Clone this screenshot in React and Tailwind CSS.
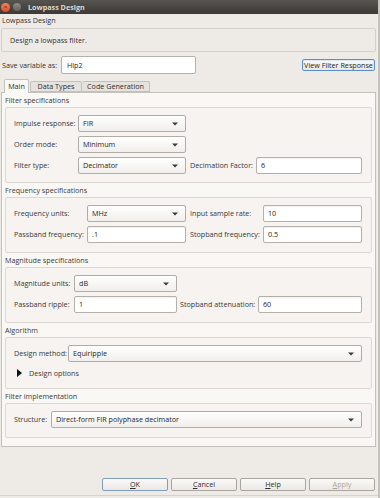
import React from 'react';

const Tri = () => (
    <svg width="6" height="4" viewBox="0 0 6 4" className="shrink-0">
        <path d="M0 0.5 L6 0.5 L3 3.5 Z" fill="#3a3a3a" />
    </svg>
);

const Combo = ({ value, w }) => (
    <div className={`${w} h-[17px] shrink-0 flex items-center justify-between pl-[4px] pr-[7px] border border-[#b1aca6] rounded-[2px] bg-gradient-to-b from-[#ffffff] to-[#f1efec] text-[#262626]`}>
        <span>{value}</span>
        <Tri />
    </div>
);

const Field = ({ value, w }) => (
    <div className={`${w} h-[17px] shrink-0 flex items-center pl-[4px] border border-[#b5b0aa] rounded-[2px] bg-white text-[#262626] shadow-[inset_0_1px_1px_rgba(0,0,0,0.06)]`}>
        {value}
    </div>
);

const Label = ({ text, w }) => <div className={`${w} shrink-0 whitespace-nowrap`}>{text}</div>;

const Section = ({ title }) => (
    <div className="h-[14px] leading-[14px] pl-[3px]">{title}</div>
);

const Group = ({ children, pb = 'pb-[8px]' }) => (
    <div className={`ml-[3px] w-[367px] border border-[#dcd8d2] rounded-[2px] bg-[#f6f3f0] pt-[7px] pl-[8px] flex flex-col gap-[4px] ${pb}`}>
        {children}
    </div>
);

const Row = ({ children }) => <div className="flex items-center">{children}</div>;

const Btn = ({ k, rest, focus, disabled }) => (
    <div className={`w-[66px] h-[13px] flex items-center justify-center rounded-[2px] border bg-gradient-to-b from-[#fbfaf9] to-[#ebe8e4] ${focus ? 'border-[#7f9dbf]' : 'border-[#aaa59f]'} ${disabled ? 'text-[#aaa6a0]' : 'text-[#2e2e2e]'}`}>
        <span><span className="underline">{k}</span>{rest}</span>
    </div>
);

export default function App() {
    return (
        <div
            className="w-[380px] h-[498px] bg-[#eeebe7] border-r-[2px] border-[#c6c2bd] flex flex-col text-[7.2px] text-[#3a3a3a] overflow-hidden"
            style={{ fontFamily: '"Open Sans", "Liberation Sans", sans-serif' }}
        >
            {/* title bar */}
            <div className="h-[14px] shrink-0 bg-gradient-to-b from-[#55544f] to-[#3b3a36] flex items-center">
                <div className="ml-[1px] w-[9px] h-[9px] rounded-full bg-gradient-to-b from-[#f4845b] to-[#df4a1f] flex items-center justify-center text-[6px] leading-none text-[#4a1a08]">×</div>
                <div className="ml-[3px] w-[8px] h-[8px] rounded-full bg-gradient-to-b from-[#8e8c86] to-[#65635e]" />
                <div className="ml-[7px] font-bold text-[#dcd8cf]">Lowpass Design</div>
            </div>

            <div className="h-[12px] leading-[12px] pl-[2px] text-[#333]">Lowpass Design</div>

            <div className="ml-[1px] mt-[2px] w-[375px] h-[24px] border border-[#d3cfca] rounded-[2px] flex items-center pl-[8px] text-[#333]">
                Design a lowpass filter.
            </div>

            {/* save row */}
            <div className="mt-[4px] h-[18px] flex items-center pl-[2px] pr-[3px]">
                <div className="w-[59px] text-[#333] whitespace-nowrap">Save variable as:</div>
                <div className="w-[135px] h-[18px] flex items-center pl-[5px] border border-[#b5b0aa] rounded-[2px] bg-white text-[#262626]">Hlp2</div>
                <div className="ml-auto w-[73px] h-[12px] flex items-center justify-center border border-[#5b8fcb] rounded-[2px] bg-gradient-to-b from-[#fbfaf9] to-[#ebe8e4] text-[#262626] shadow-[inset_0_0_0_1px_#dfe9f5] whitespace-nowrap">
                    View Filter Response
                </div>
            </div>

            {/* tabs */}
            <div className="mt-[5px] h-[13px] flex items-end pl-[4px] relative z-10">
                <div className="w-[25px] h-[14px] -mb-[1px] flex items-center justify-center border border-b-0 border-[#c4c0bb] rounded-t-[2px] bg-[#faf8f5] text-[#2e2e2e]">Main</div>
                <div className="ml-[1px] w-[52px] h-[11px] flex items-center justify-center border border-[#c4c0bb] rounded-t-[2px] bg-[#e6e2dd] text-[#2e2e2e]">Data Types</div>
                <div className="w-[68px] h-[11px] flex items-center justify-center border border-l-0 border-[#c4c0bb] rounded-t-[2px] bg-[#e6e2dd] text-[#2e2e2e]">Code Generation</div>
            </div>

            {/* panel */}
            <div className="ml-[1px] w-[375px] h-[355px] shrink-0 border border-[#c4c0bb] bg-[#faf8f5] flex flex-col">
                <Section title="Filter specifications" />
                <Group>
                    <Row>
                        <Label text="Impulse response:" w="w-[64px]" />
                        <Combo value="FIR" w="w-[108px]" />
                    </Row>
                    <Row>
                        <Label text="Order mode:" w="w-[64px]" />
                        <Combo value="Minimum" w="w-[108px]" />
                    </Row>
                    <Row>
                        <Label text="Filter type:" w="w-[64px]" />
                        <Combo value="Decimator" w="w-[108px]" />
                        <Label text="Decimation Factor:" w="ml-[4px] w-[66px]" />
                        <Field value="6" w="w-[106px]" />
                    </Row>
                </Group>

                <Section title="Frequency specifications" />
                <Group pb="pb-[9px]">
                    <Row>
                        <Label text="Frequency units:" w="w-[73px]" />
                        <Combo value="MHz" w="w-[99px]" />
                        <Label text="Input sample rate:" w="ml-[4px] w-[73px]" />
                        <Field value="10" w="w-[99px]" />
                    </Row>
                    <Row>
                        <Label text="Passband frequency:" w="w-[73px]" />
                        <Field value=".1" w="w-[99px]" />
                        <Label text="Stopband frequency:" w="ml-[4px] w-[73px]" />
                        <Field value="0.5" w="w-[99px]" />
                    </Row>
                </Group>

                <Section title="Magnitude specifications" />
                <Group pb="pb-[9px]">
                    <Row>
                        <Label text="Magnitude units:" w="w-[60px]" />
                        <Combo value="dB" w="w-[103px]" />
                    </Row>
                    <Row>
                        <Label text="Passband ripple:" w="w-[60px]" />
                        <Field value="1" w="w-[103px]" />
                        <Label text="Stopband attenuation:" w="ml-[3px] w-[78px]" />
                        <Field value="60" w="w-[104px]" />
                    </Row>
                </Group>

                <Section title="Algorithm" />
                <Group pb="pb-[8px]">
                    <Row>
                        <Label text="Design method:" w="w-[54px]" />
                        <Combo value="Equiripple" w="w-[294px]" />
                    </Row>
                    <div className="h-[14px] flex items-center pl-[3px]">
                        <svg width="5" height="8" viewBox="0 0 5 8" className="shrink-0">
                            <path d="M0 0 L5 4 L0 8 Z" fill="#111" />
                        </svg>
                        <span className="ml-[7px]">Design options</span>
                    </div>
                </Group>

                <Section title="Filter implementation" />
                <Group pb="pb-[9px]">
                    <Row>
                        <Label text="Structure:" w="w-[37px]" />
                        <Combo value="Direct-form FIR polyphase decimator" w="w-[311px]" />
                    </Row>
                </Group>
            </div>

            {/* buttons */}
            <div className="mt-[31px] flex gap-[3px] pl-[102px]">
                <Btn k="O" rest="K" focus />
                <Btn k="C" rest="ancel" />
                <Btn k="H" rest="elp" />
                <Btn k="A" rest="pply" disabled />
            </div>
            <div className="mt-[4px] h-px bg-[#d6d2cd]" />
        </div>
    );
}
